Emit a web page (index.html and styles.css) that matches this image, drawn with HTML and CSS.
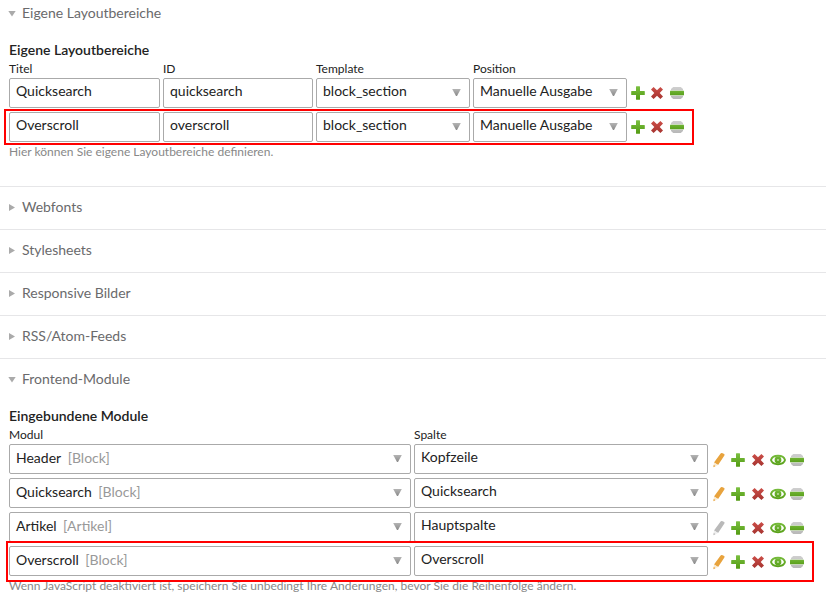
FILE: index.html
```html
<!DOCTYPE html>
<html lang="de">
<head>
<meta charset="utf-8">
<title>Seitenlayout</title>
<link rel="stylesheet" href="styles.css">
</head>
<body>
<svg class="sprite" aria-hidden="true">
  <defs>
    <linearGradient id="green" gradientUnits="userSpaceOnUse" x1="0" y1="1" x2="0" y2="15"><stop offset="0" stop-color="#7cc142"/><stop offset="1" stop-color="#529a12"/></linearGradient>
    <linearGradient id="bar" gradientUnits="userSpaceOnUse" x1="0" y1="5" x2="0" y2="11"><stop offset="0" stop-color="#72b636"/><stop offset="1" stop-color="#579d19"/></linearGradient>
    <linearGradient id="red" x1="0" y1="0" x2="0" y2="1"><stop offset="0" stop-color="#cc4e48"/><stop offset="1" stop-color="#a63430"/></linearGradient>
    <linearGradient id="gray" gradientUnits="userSpaceOnUse" x1="0" y1="2" x2="0" y2="14"><stop offset="0" stop-color="#cfcfcf"/><stop offset="1" stop-color="#b8b8b8"/></linearGradient>
    <linearGradient id="arrow" x1="0" y1="0" x2="0" y2="1"><stop offset="0" stop-color="#b4b4b4"/><stop offset="1" stop-color="#8a8a8a"/></linearGradient>
  </defs>
  <symbol id="plus" viewBox="0 0 16 16"><path fill="url(#green)" d="M6.500 1.200h3q.5 0 .5.5V6h4.300q.5 0 .5.5v3q0 .5-.5.5H10v4.300q0 .5-.5.5h-3q-.5 0-.5-.5V10H1.700q-.5 0-.5-.5v-3q0-.5.5-.5H6V1.700q0-.5.5-.5z"/></symbol>
  <symbol id="cross" viewBox="0 0 16 16"><path fill="url(#red)" d="M4.600 2 8 5.300 11.400 2 14 4.500 10.700 8 14 11.500 11.400 14 8 10.700 4.600 14 2 11.500 5.300 8 2 4.500z"/></symbol>
  <symbol id="drag" viewBox="0 0 16 16"><path fill="url(#gray)" d="M4.200 2h7.600L14 4v1.200H2V4zM2 10.800h12V12l-2.200 2H4.200L2 12z"/><path fill="#e6e6e6" d="M1.500 5.200h13v5.600h-13z"/><path fill="url(#bar)" d="M1.500 5.800h13q.5 0 .5.5v3.500q0 .5-.5.5h-13q-.5 0-.5-.5V6.300q0-.5.5-.5z"/></symbol>
  <symbol id="eye" viewBox="0 0 16 16"><path fill="none" stroke="url(#green)" stroke-width="1.900" d="M1 8C1.800 5 4.500 3.800 8 3.800S14.200 5 15 8C14.200 11 11.500 12.200 8 12.200S1.800 11 1 8z"/><circle cx="8" cy="8" r="2.100" fill="none" stroke="url(#green)" stroke-width="2.600"/></symbol>
  <symbol id="pencil" viewBox="0 0 16 16"><path fill="currentColor" d="M9.600 1.600q.5-.8 1.400-.5l2.200 1q.6.500.2 1.300L7.100 12.900 3 10.400z"/><path d="M3 10.400 7.100 12.900 2.500 15z"/><path fill="currentColor" d="M2.700 12.800 4.400 14.200 2.400 15.200z"/></symbol>
  <symbol id="down" viewBox="0 0 9 7"><path fill="url(#arrow)" d="M.2 0h8.600L5 7H4z"/></symbol>
</svg>

<section class="panel panel-layout">
  <h2 class="legend open">Eigene Layoutbereiche</h2>
  <h3>Eigene Layoutbereiche</h3>
  <div class="row labels sections"><span>Titel</span><span>ID</span><span>Template</span><span>Position</span></div>
  <div class="row sections">
    <div class="field">Quicksearch</div><div class="field">quicksearch</div>
    <div class="field">block_section<svg class="caret"><use href="#down"/></svg></div>
    <div class="field">Manuelle Ausgabe<svg class="caret"><use href="#down"/></svg></div>
    <div class="tools"><svg><use href="#plus"/></svg><svg><use href="#cross"/></svg><svg><use href="#drag"/></svg></div>
  </div>
  <div class="row sections marked">
    <div class="field">Overscroll</div><div class="field">overscroll</div>
    <div class="field">block_section<svg class="caret"><use href="#down"/></svg></div>
    <div class="field">Manuelle Ausgabe<svg class="caret"><use href="#down"/></svg></div>
    <div class="tools"><svg><use href="#plus"/></svg><svg><use href="#cross"/></svg><svg><use href="#drag"/></svg></div>
  </div>
  <p class="hint">Hier können Sie eigene Layoutbereiche definieren.</p>
</section>
<section class="panel"><h2 class="legend">Webfonts</h2></section>
<section class="panel"><h2 class="legend">Stylesheets</h2></section>
<section class="panel"><h2 class="legend">Responsive Bilder</h2></section>
<section class="panel"><h2 class="legend">RSS/Atom-Feeds</h2></section>
<section class="panel panel-modules">
  <h2 class="legend open">Frontend-Module</h2>
  <h3>Eingebundene Module</h3>
  <div class="row labels modules"><span>Modul</span><span>Spalte</span></div>
  <div class="row modules">
    <div class="field module">Header <span class="type">[Block]</span><svg class="caret"><use href="#down"/></svg></div>
    <div class="field">Kopfzeile<svg class="caret"><use href="#down"/></svg></div>
    <div class="tools"><svg class="pencil"><use href="#pencil"/></svg><svg><use href="#plus"/></svg><svg><use href="#cross"/></svg><svg><use href="#eye"/></svg><svg><use href="#drag"/></svg></div>
  </div>
  <div class="row modules">
    <div class="field module">Quicksearch <span class="type">[Block]</span><svg class="caret"><use href="#down"/></svg></div>
    <div class="field">Quicksearch<svg class="caret"><use href="#down"/></svg></div>
    <div class="tools"><svg class="pencil"><use href="#pencil"/></svg><svg><use href="#plus"/></svg><svg><use href="#cross"/></svg><svg><use href="#eye"/></svg><svg><use href="#drag"/></svg></div>
  </div>
  <div class="row modules">
    <div class="field module">Artikel <span class="type">[Artikel]</span><svg class="caret"><use href="#down"/></svg></div>
    <div class="field">Hauptspalte<svg class="caret"><use href="#down"/></svg></div>
    <div class="tools"><svg class="pencil disabled"><use href="#pencil"/></svg><svg><use href="#plus"/></svg><svg><use href="#cross"/></svg><svg><use href="#eye"/></svg><svg><use href="#drag"/></svg></div>
  </div>
  <div class="row modules marked">
    <div class="field module">Overscroll <span class="type">[Block]</span><svg class="caret"><use href="#down"/></svg></div>
    <div class="field">Overscroll<svg class="caret"><use href="#down"/></svg></div>
    <div class="tools"><svg class="pencil"><use href="#pencil"/></svg><svg><use href="#plus"/></svg><svg><use href="#cross"/></svg><svg><use href="#eye"/></svg><svg><use href="#drag"/></svg></div>
  </div>
  <p class="hint">Wenn JavaScript deaktiviert ist, speichern Sie unbedingt Ihre Änderungen, bevor Sie die Reihenfolge ändern.</p>
</section>
</body>
</html>
```
FILE: styles.css
```css
*, *::before, *::after { box-sizing: border-box; }
body {
  margin: 0;
  background: #fff;
  color: #222;
  font: 14px/18px Lato, "Liberation Sans", sans-serif;
  overflow: hidden;
}
h2, h3, p { margin: 0; }
.sprite { position: absolute; width: 0; height: 0; }

.panel { height: 43px; padding: 11px 9px 0; border-top: 1px solid #e6e6e8; }
.panel-layout { height: 186px; padding-top: 4px; border-top: 0; }
.panel-modules { height: 247px; }

.legend { display: flex; align-items: center; height: 18px; font-size: 14px; font-weight: 400; color: #6a6a6c; }
.legend::before {
  content: "";
  width: 6px;
  height: 7px;
  margin: 1px 7px 0 0;
  background: #aaa;
  clip-path: polygon(0 0, 100% 50%, 0 100%);
}
.legend.open::before { width: 8px; height: 6px; margin: 1px 6px 0 -1px; clip-path: polygon(0 0, 100% 0, 50% 100%); }

h3 { margin-top: 19px; height: 18px; font-size: 14px; font-weight: 600; }

.row { position: relative; display: grid; column-gap: 3px; height: 30px; margin-bottom: 4px; }
.sections { grid-template-columns: 151px 150px 154px 154px 56px; }
.modules { grid-template-columns: 402px 294px 96px; }
.labels { height: 16px; margin: 2px 0 1px; font-size: 12px; line-height: 16px; }

.field {
  display: flex;
  align-items: center;
  padding: 0 8px 4px 6px;
  border: 1px solid #aaa;
  border-radius: 2px;
  background: #fff;
}
.module { padding-bottom: 2px; }
.type { margin-left: 6.5px; color: #999; }
.caret { width: 9px; height: 7px; margin: 3px 0 0 auto; }
.module .caret { margin-top: 1px; }

.tools { display: flex; gap: 4px; padding-top: 7px; }
.tools svg { width: 16px; height: 16px; flex: none; }
.sections .tools svg:nth-child(2) { margin-left: -1px; }
.modules .tools { padding-top: 8px; }
.modules .tools svg:last-child { margin-left: -1px; }
.tools .pencil { margin-right: -1px; color: #e8a33d; fill: #f9ead0; }
.tools .pencil.disabled { color: #b9b9b9; fill: #eee; }

.marked::after { content: ""; position: absolute; border: 2px solid #f00; }
.sections.marked::after { inset: -3px auto -3px -5px; width: 690px; }
.modules.marked::after { inset: -5px auto -6px -3px; width: 808px; }

.hint { height: 16px; margin-top: -2px; font-size: 12px; line-height: 16px; color: #888; word-spacing: .07px; }
```
